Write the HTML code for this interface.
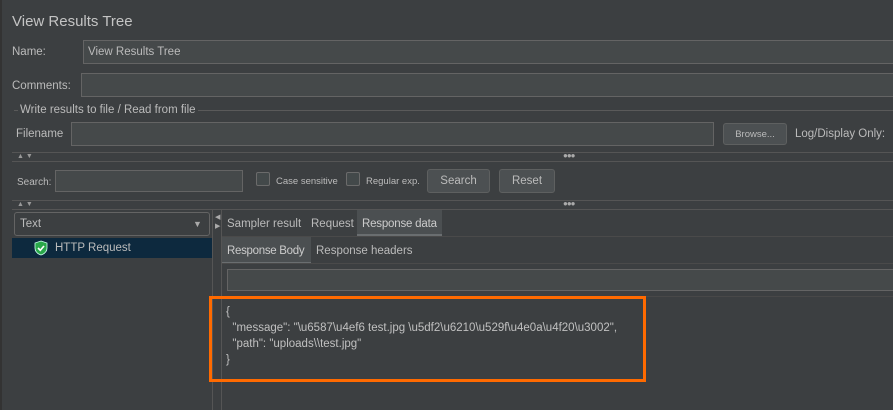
<!DOCTYPE html>
<html><head><style>
*{margin:0;padding:0;box-sizing:border-box}
body{width:893px;height:410px;background:#3c3f41;font-family:"Liberation Sans",sans-serif;color:#bbbbbb;font-size:11.5px;position:relative;overflow:hidden}
.a{position:absolute;white-space:nowrap}
.f{position:absolute;background:#45494a;border:1px solid #646464}
.b{position:absolute;background:#4c5052;border:1px solid #5e6060;border-radius:3px;text-align:center}
.l{position:absolute;height:1px;background:#555}
.cb{position:absolute;width:14px;height:14px;border:1px solid #6b6b6b;border-radius:2px;background:#43494a}
</style></head><body>
<div class="a" style="left:0;top:0;width:2px;height:410px;background:#333"></div>
<div class="a" style="left:12px;top:13px;font-size:15px;color:#c4c4c4">View Results Tree</div>
<div class="a" style="left:12px;top:46px">Name:</div>
<div class="f" style="left:83px;top:40px;width:815px;height:24px"></div>
<div class="a" style="left:88px;top:46px">View Results Tree</div>
<div class="a" style="left:12px;top:80px">Comments:</div>
<div class="f" style="left:81px;top:73px;width:815px;height:24px"></div>
<div class="l" style="left:14px;top:110px;width:879px;background:#5a5a5a"></div>
<div class="a" style="left:18px;top:104px;padding:0 2px;background:#3c3f41">Write results to file / Read from file</div>
<div class="a" style="left:16px;top:128px">Filename</div>
<div class="f" style="left:71px;top:122px;width:643px;height:24px"></div>
<div class="b" style="left:723px;top:123px;width:64px;height:22px;font-size:9.5px;line-height:21px">Browse...</div>
<div class="a" style="left:795px;top:128px">Log/Display Only:</div>
<div class="l" style="left:12px;top:152px;width:881px"></div>
<div class="a" style="left:17px;top:153px;font-size:7px;color:#999">▲ ▼</div>
<div class="a" style="left:563px;top:151px;font-size:8px;color:#aaa;letter-spacing:-1px">●●●</div>
<div class="l" style="left:12px;top:161px;width:881px"></div>
<div class="a" style="left:17px;top:177px;font-size:10px">Search:</div>
<div class="f" style="left:55px;top:170px;width:188px;height:22px"></div>
<div class="cb" style="left:256px;top:172px"></div>
<div class="a" style="left:276px;top:176px;font-size:9.5px">Case sensitive</div>
<div class="cb" style="left:346px;top:172px"></div>
<div class="a" style="left:366px;top:176px;font-size:9.5px">Regular exp.</div>
<div class="b" style="left:427px;top:169px;width:63px;height:24px;line-height:23px">Search</div>
<div class="b" style="left:499px;top:169px;width:56px;height:24px;line-height:23px">Reset</div>
<div class="l" style="left:12px;top:200px;width:881px"></div>
<div class="a" style="left:17px;top:201px;font-size:7px;color:#999">▲ ▼</div>
<div class="a" style="left:563px;top:199px;font-size:8px;color:#aaa;letter-spacing:-1px">●●●</div>
<div class="l" style="left:12px;top:209px;width:881px"></div>
<div class="a" style="left:14px;top:212px;width:196px;height:24px;border:1px solid #646464;border-radius:3px"></div>
<div class="a" style="left:20px;top:218px">Text</div>
<div class="a" style="left:193px;top:219px;font-size:9px;color:#aaa">▼</div>
<div class="a" style="left:12px;top:238px;width:200px;height:20px;background:#0d293e"></div>
<svg class="a" style="left:34px;top:240px" width="14" height="16" viewBox="0 0 14 16"><path d="M7 1 L13 3 V8 C13 12 10 14 7 15 C4 14 1 12 1 8 V3 Z" fill="#2aa84a" stroke="#cfe" stroke-width="0.8"/><path d="M4 8 L6.3 10.3 L10 6" fill="none" stroke="#fff" stroke-width="1.6"/></svg>
<div class="a" style="left:55px;top:242px">HTTP Request</div>
<div class="a" style="left:212px;top:210px;width:1px;height:200px;background:#555"></div>
<div class="a" style="left:215px;top:213px;font-size:7px;color:#aaa;line-height:9px">◀<br>▶</div>
<div class="a" style="left:221px;top:210px;width:1px;height:200px;background:#555"></div>
<div class="a" style="left:357px;top:210px;width:85px;height:26px;background:#4b4f51;border-bottom:2px solid #6a6e70"></div>
<div class="a" style="left:227px;top:218px">Sampler result</div>
<div class="a" style="left:311px;top:218px">Request</div>
<div class="a" style="left:362px;top:218px;color:#ccc;letter-spacing:-0.2px">Response data</div>
<div class="l" style="left:222px;top:236px;width:671px;background:#4a4a4a"></div>
<div class="a" style="left:222px;top:237px;width:89px;height:27px;background:#4b4f51;border-bottom:2px solid #6a6e70"></div>
<div class="a" style="left:227px;top:245px;color:#ccc;letter-spacing:-0.3px">Response Body</div>
<div class="a" style="left:316px;top:245px">Response headers</div>
<div class="l" style="left:222px;top:263px;width:671px;background:#4a4a4a"></div>
<div class="f" style="left:227px;top:269px;width:670px;height:22px"></div>
<div class="l" style="left:222px;top:296px;width:671px;background:#484848"></div>
<div class="a" style="left:226px;top:304px;line-height:16px;font-size:11.5px;color:#c0c0c0">{<br>&nbsp;&nbsp;"message": "\u6587\u4ef6 test.jpg \u5df2\u6210\u529f\u4e0a\u4f20\u3002",<br>&nbsp;&nbsp;"path": "uploads\\test.jpg"<br>}</div>
<div class="a" style="left:209px;top:296px;width:437px;height:86px;border:3px solid #ff6a00"></div>
</body></html>
